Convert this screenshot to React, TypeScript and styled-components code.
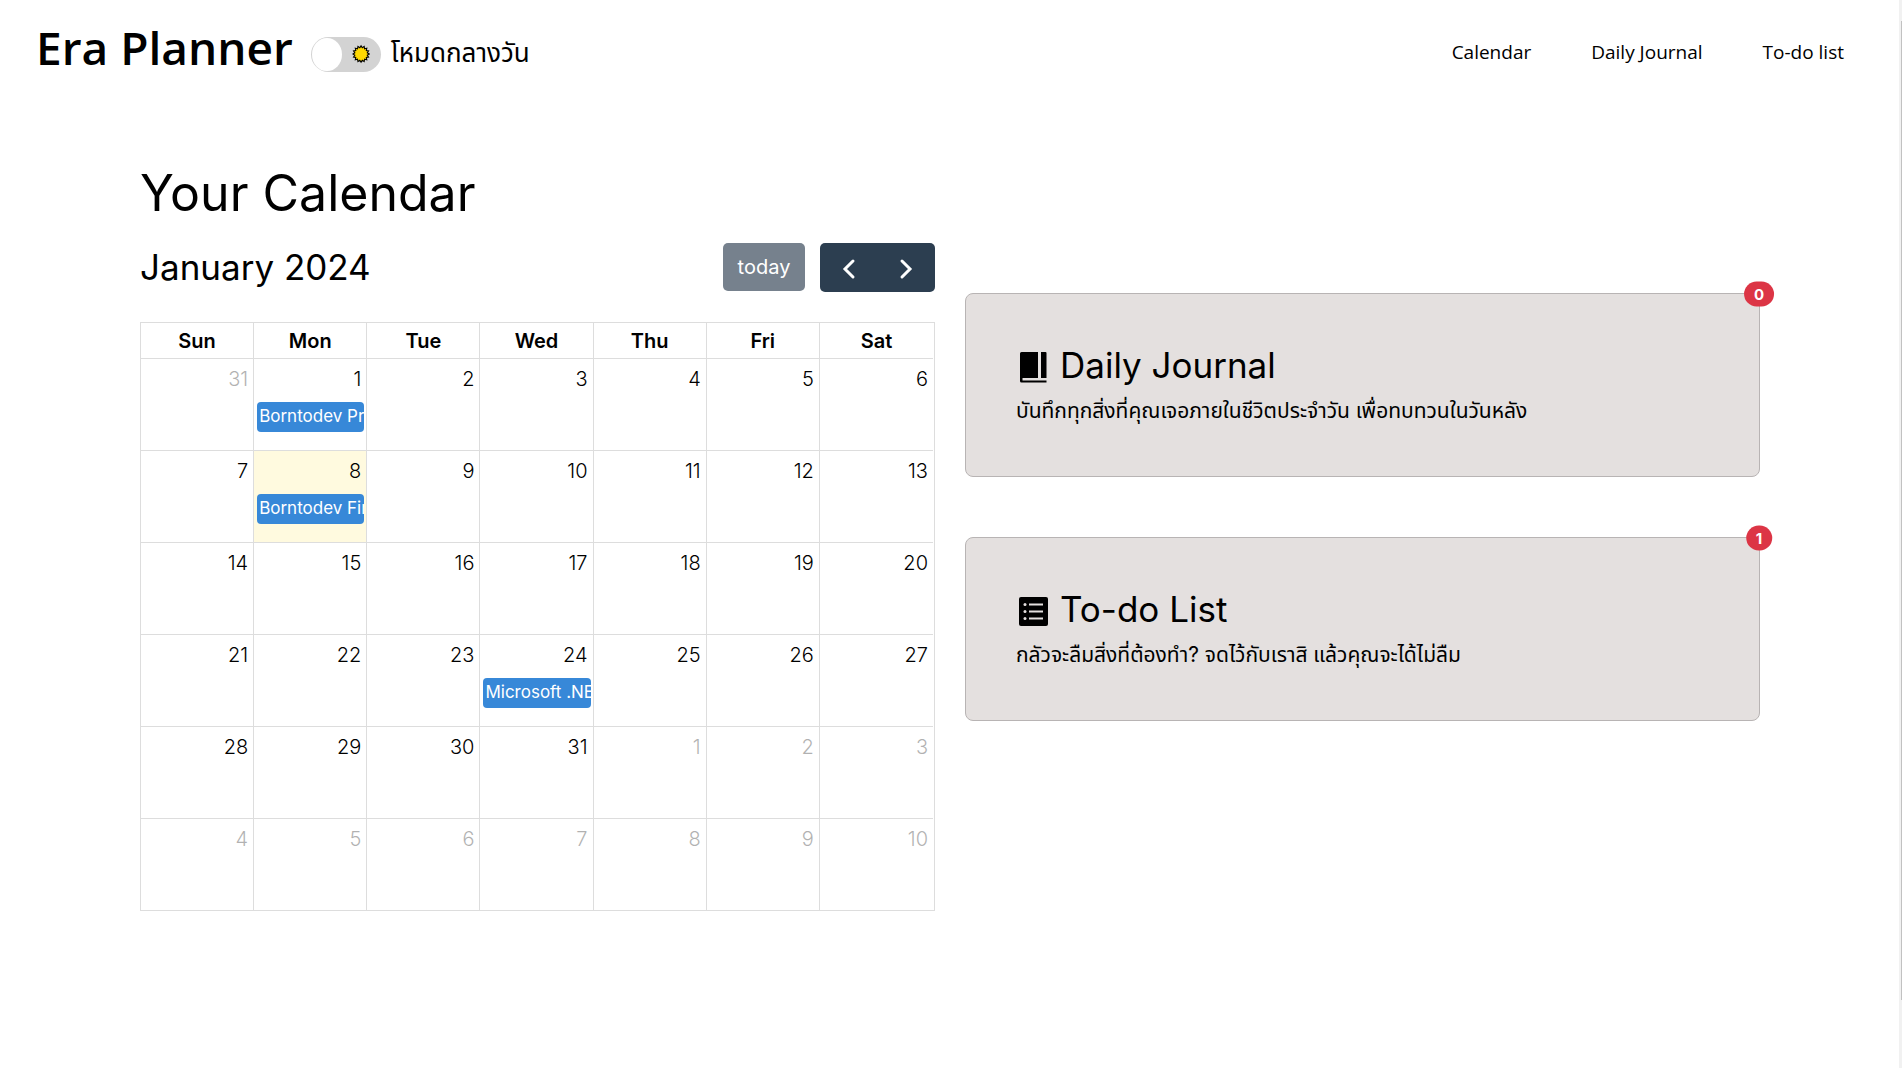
import React, { useState } from "react";
import styled, { createGlobalStyle } from "styled-components";

const GlobalStyle = createGlobalStyle`
  * { box-sizing: border-box; }
  body { margin: 0; background: #fff; color: #000; font-family: Inter, "Noto Sans Thai", "Loma", "Noto Sans", sans-serif; font-size: 20px; line-height: 30px; }
  h1, h2, p { margin: 0; }
  h1, h2 { font-weight: 400; }
  button { font: inherit; border: 0; cursor: pointer; }
`;

const Shell = styled.div`
  display: flex;
  min-height: 100vh;
`;

const Page = styled.div`
  flex: 1;
  min-width: 0;
`;

const ScrollTrack = styled.div`
  display: flex;
  width: 3px;
  padding: 21px 0 68px 2px;
  background: #f1f1f1;
`;

const ScrollThumb = styled.div`
  flex: 1;
  background: #c1c1c1;
`;

const Header = styled.header`
  display: flex;
  align-items: center;
  height: 104px;
  padding: 0 55px 0 36px;
  font-family: "Open Sans", "Noto Sans Thai", "Loma", sans-serif;
`;

const Brand = styled.h1`
  font-size: 46px;
  font-weight: 600;
  line-height: 72px;
  margin-bottom: 10px;
`;

const ModeToggle = styled.label`
  display: flex;
  align-items: center;
  gap: 10px;
  margin-left: 18px;
  font-size: 26px;
  cursor: pointer;
`;

const ModeInput = styled.input`
  position: absolute;
  opacity: 0;
`;

const ModeTrack = styled.span<{ $night: boolean }>`
  display: flex;
  flex-direction: ${(p) => (p.$night ? "row-reverse" : "row")};
  align-items: center;
  justify-content: space-between;
  width: 70px;
  height: 35px;
  margin-top: 4px;
  padding: 1px;
  border-radius: 18px;
  background: #d3d3d3;

  svg { margin: 0 10px; }
`;

const ModeKnob = styled.span`
  width: 33px;
  height: 33px;
  border-radius: 50%;
  background: #fff;
`;

const Nav = styled.nav`
  display: flex;
  gap: 60px;
  margin-left: auto;
  font-size: 19px;

  a { color: #000; text-decoration: none; }
`;

const Main = styled.main`
  display: grid;
  grid-template-columns: 1fr 1fr;
  gap: 30px;
  padding: 52px 139px 60px 140px;
`;

const Heading = styled.h1`
  font-size: 50px;
  line-height: 75px;
`;

const Toolbar = styled.div`
  display: flex;
  align-items: flex-start;
  gap: 15px;
  margin: 12px 0 30px;
`;

const Month = styled.h2`
  flex: 1;
  font-size: 35px;
  line-height: 49px;
`;

const TodayButton = styled.button`
  min-width: 82px;
  height: 48px;
  padding: 0 14px;
  border-radius: 5px;
  background: #76818d;
  color: #fff;
`;

const ArrowGroup = styled.div`
  display: flex;
  width: 115px;
  height: 49px;
  border-radius: 5px;
  background: #2c3e50;
`;

const ArrowButton = styled.button`
  flex: 1;
  display: grid;
  place-items: center;
  padding: 0;
  background: none;
  color: #fff;
`;

const CalendarFrame = styled.div`
  padding-right: 1px;
  border: 1px solid #ddd;
`;

const CalendarTable = styled.table`
  width: 100%;
  table-layout: fixed;
  border-spacing: 0;
`;

const DayHeader = styled.th`
  height: 35px;
  padding: 0;
  border-right: 1px solid #ddd;
  font-weight: 600;
  &:last-child { border-right: 0; }
`;

const DayCell = styled.td<{ $today: boolean }>`
  height: 92px;
  padding: 5px 2px 0 3px;
  vertical-align: top;
  border-top: 1px solid #ddd;
  border-right: 1px solid #ddd;
  background: ${(p) => (p.$today ? "#fffadf" : "transparent")};
  &:last-child { border-right: 0; }
`;

const DayNumber = styled.div<{ $muted: boolean }>`
  padding-right: 3px;
  text-align: right;
  font-weight: 300;
  opacity: ${(p) => (p.$muted ? 0.3 : 1)};
`;

const EventLink = styled.a`
  display: block;
  height: 30px;
  margin-top: 8px;
  padding: 0 2px;
  overflow: hidden;
  white-space: nowrap;
  border-radius: 4px;
  background: #3788d8;
  color: #fff;
  font-size: 17px;
  line-height: 28px;
  text-decoration: none;
`;

const Cards = styled.div`
  display: flex;
  flex-direction: column;
  gap: 60px;
  padding-top: 137px;
`;

const Card = styled.section`
  position: relative;
  height: 184px;
  padding: 46px 50px;
  border: 1px solid #b8b4b4;
  border-radius: 8px;
  background: #e4e0df;
`;

const CardTitle = styled.h2`
  display: flex;
  align-items: center;
  gap: 9px;
  margin-bottom: 6px;
  font-size: 35px;
  line-height: 50px;
  svg { width: 35px; height: 35px; margin-top: 4px; }
`;

const CardText = styled.p`
  font-size: 21px;
`;

const Badge = styled.span`
  position: absolute;
  top: 0;
  right: 0;
  padding: 5px 10px;
  border-radius: 16px;
  transform: translate(50%, -50%);
  background: #dc3545;
  color: #fff;
  font-size: 15px;
  font-weight: 700;
  line-height: 15px;
`;

const SunIcon = () => {
  const points = Array.from({ length: 32 }, (_, i) => {
    const r = i % 2 ? 7 : 9;
    const a = (i * Math.PI) / 16;
    return `${(10 + r * Math.sin(a)).toFixed(2)},${(10 - r * Math.cos(a)).toFixed(2)}`;
  }).join(" ");
  return (
    <svg width="20" height="20" viewBox="0 0 20 20" aria-hidden="true">
      <polygon points={points} fill="#ffd800" stroke="#000" strokeWidth="1.2" />
    </svg>
  );
};

const Chevron = ({ right = false }: { right?: boolean }) => (
  <svg width="30" height="30" viewBox="0 0 30 30" fill="none" stroke="currentColor" strokeWidth="3" strokeLinecap="round" aria-hidden="true">
    <path d={right ? "M11 8l8 8-8 8" : "M19 8l-8 8 8 8"} />
  </svg>
);

const BookIcon = () => (
  <svg viewBox="0 0 35 35" aria-hidden="true">
    <path d="M5.500 2H22V28H6.500V30.500H30.500V32.500H5.500Q4 32.500 4 31V3.500Q4 2 5.500 2zM25 2H29.500Q30.500 2 30.500 3V28H25z" />
  </svg>
);

const ListIcon = () => (
  <svg viewBox="0 0 35 35" aria-hidden="true">
    <rect x="3" y="3" width="29" height="29" rx="2" />
    <path d="M13 10.500h14M13 17.500h14M13 24.500h14" stroke="#e4e0df" strokeWidth="2" />
    <circle cx="9" cy="10.500" r="1.500" fill="#e4e0df" />
    <circle cx="9" cy="17.500" r="1.500" fill="#e4e0df" />
    <circle cx="9" cy="24.500" r="1.500" fill="#e4e0df" />
  </svg>
);

const weekdays = ["Sun", "Mon", "Tue", "Wed", "Thu", "Fri", "Sat"];
const events: Record<number, string> = {
  1: "Borntodev Project",
  8: "Borntodev Final",
  24: "Microsoft .NET",
};

const weeks = Array.from({ length: 6 }, (_, w) =>
  Array.from({ length: 7 }, (_, d) => {
    const n = w * 7 + d;
    return { number: n === 0 ? 31 : n > 31 ? n - 31 : n, outside: n === 0 || n > 31, event: events[n], today: n === 8 };
  })
);

export default function App() {
  const [night, setNight] = useState(false);
  return (
    <Shell>
      <GlobalStyle />
      <Page>
        <Header>
          <Brand>Era Planner</Brand>
          <ModeToggle>
            <ModeInput type="checkbox" checked={night} onChange={(e) => setNight(e.target.checked)} />
            <ModeTrack $night={night}>
              <ModeKnob />
              <SunIcon />
            </ModeTrack>
            <span>โหมดกลางวัน</span>
          </ModeToggle>
          <Nav>
            <a href="#calendar">Calendar</a>
            <a href="#journal">Daily Journal</a>
            <a href="#todo">To-do list</a>
          </Nav>
        </Header>
        <Main>
          <section id="calendar">
            <Heading>Your Calendar</Heading>
            <Toolbar>
              <Month>January 2024</Month>
              <TodayButton>today</TodayButton>
              <ArrowGroup>
                <ArrowButton aria-label="Previous month"><Chevron /></ArrowButton>
                <ArrowButton aria-label="Next month"><Chevron right /></ArrowButton>
              </ArrowGroup>
            </Toolbar>
            <CalendarFrame>
              <CalendarTable>
                <thead>
                  <tr>{weekdays.map((d) => <DayHeader key={d} scope="col">{d}</DayHeader>)}</tr>
                </thead>
                <tbody>
                  {weeks.map((week, i) => (
                    <tr key={i}>
                      {week.map((day, j) => (
                        <DayCell key={j} $today={day.today}>
                          <DayNumber $muted={day.outside}>{day.number}</DayNumber>
                          {day.event && <EventLink href="#calendar">{day.event}</EventLink>}
                        </DayCell>
                      ))}
                    </tr>
                  ))}
                </tbody>
              </CalendarTable>
            </CalendarFrame>
          </section>
          <Cards>
            <Card id="journal">
              <CardTitle><BookIcon />Daily Journal</CardTitle>
              <CardText>บันทึกทุกสิ่งที่คุณเจอภายในชีวิตประจำวัน เพื่อทบทวนในวันหลัง</CardText>
              <Badge>0</Badge>
            </Card>
            <Card id="todo">
              <CardTitle><ListIcon />To-do List</CardTitle>
              <CardText>กลัวจะลืมสิ่งที่ต้องทำ? จดไว้กับเราสิ แล้วคุณจะได้ไม่ลืม</CardText>
              <Badge>1</Badge>
            </Card>
          </Cards>
        </Main>
      </Page>
      <ScrollTrack><ScrollThumb /></ScrollTrack>
    </Shell>
  );
}
